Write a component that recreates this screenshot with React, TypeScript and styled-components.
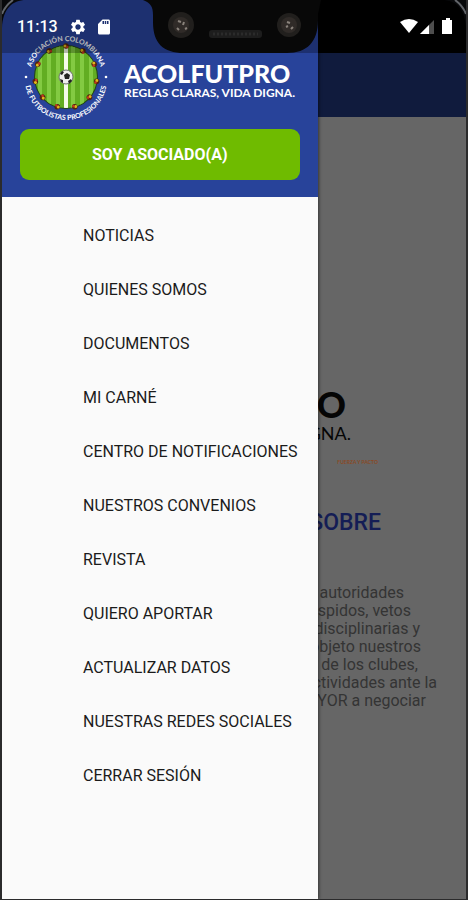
import React from "react";
import styled, { createGlobalStyle } from "styled-components";
import { MdSdCard, MdSettings } from "react-icons/md";

const GlobalStyle = createGlobalStyle`
  *, *::before, *::after { box-sizing: border-box; }
  body { margin: 0; background: #1c1d1f; font-family: Roboto, "Liberation Sans", sans-serif; }
`;

const Phone = styled.div`
  position: relative;
  min-height: 100vh;
  overflow: hidden;
  border: solid #2b2b2c;
  border-width: 0 2px 1px;
  background: #666666;
`;

const Page = styled.main`
  display: flex;
  flex-direction: column;
`;

const AppBar = styled.div`
  height: 117px;
  border-top: 53px solid #000000;
  background: #101b3d;
`;

const Hero = styled.section`
  display: flex;
  flex-direction: column;
  align-items: flex-end;
  padding-top: 268px;
  color: #050505;
`;

const HeroBrand = styled.strong`
  padding-right: 120px;
  font: 900 36px/38px Lato, sans-serif;
`;

const HeroTagline = styled.span`
  padding-right: 115px;
  font: 400 18px/20px Lato, sans-serif;
`;

const HeroCredit = styled.small`
  padding: 15px 88px 0 0;
  font: 700 5px/8px Lato, sans-serif;
  color: #8a4a25;
`;

const Heading = styled.h1`
  margin: 41px 0 44px;
  padding-right: 85px;
  text-align: right;
  font-size: 23px;
  line-height: 32px;
  font-weight: 500;
  color: #141d55;
`;

const Excerpt = styled.p`
  margin: 0;
  padding-top: 1px;
  font-size: 16px;
  line-height: 18px;
  color: #343434;
`;

const ExcerptLine = styled.span<{ $end: number }>`
  display: block;
  padding-right: ${({ $end }) => $end}px;
  text-align: right;
  white-space: nowrap;
`;

const Drawer = styled.aside`
  position: absolute;
  inset: 0 auto 0 0;
  width: 68%;
  background: #fafafa;
  box-shadow: 1px 0 3px rgba(0, 0, 0, 0.5);
`;

const DrawerHeader = styled.header`
  display: flex;
  flex-direction: column;
  height: 197px;
  padding: 33px 18px 17px;
  background: #28439a;
`;

const Brand = styled.div`
  display: flex;
  align-items: center;
  gap: 14px;
  height: 88px;
  padding-left: 2px;
`;

const Crest = styled.svg`
  flex: none;
  width: 88px;
  height: 88px;
  overflow: visible;
  font: 700 7px Lato, sans-serif;
`;

const BrandText = styled.div`
  display: flex;
  flex-direction: column;
  padding-top: 8px;
  white-space: nowrap;
  color: #ffffff;
`;

const BrandName = styled.strong`
  font: 900 25px/24px Lato, sans-serif;
`;

const Tagline = styled.span`
  font: 700 12px/16px Lato, sans-serif;
`;

const MemberButton = styled.button`
  height: 51px;
  margin-top: 8px;
  flex: none;
  border: 0;
  border-radius: 9px;
  background: #6fbb00;
  color: #ffffff;
  font: 700 16px/20px Roboto, sans-serif;
`;

const Menu = styled.ul`
  margin: 0;
  padding: 12px 0;
  list-style: none;
`;

const MenuLink = styled.a`
  display: flex;
  align-items: center;
  height: 54px;
  padding-left: 81px;
  font-size: 16px;
  line-height: 20px;
  white-space: nowrap;
  color: #1b1b1b;
  text-decoration: none;
`;

const StatusBar = styled.div`
  position: absolute;
  inset: 0 0 auto;
  display: flex;
  align-items: center;
  justify-content: space-between;
  height: 53px;
  padding: 0 14px 0 15px;
  background: rgba(0, 0, 0, 0.27);
  color: #ffffff;
`;

const StatusGroup = styled.div`
  display: flex;
  align-items: center;
  gap: 8px;
  height: 53px;
`;

const Clock = styled.time`
  width: 44px;
  font-size: 16px;
  line-height: 22px;
  font-weight: 500;
`;

const SignalIcons = styled.svg`
  display: block;
  width: 52px;
  height: 18px;
`;

const Bezel = styled.svg`
  position: absolute;
  top: 0;
  left: 141px;
  width: 178px;
  height: 53px;
`;

const Corner = styled.svg<{ $right?: boolean }>`
  position: absolute;
  top: 0;
  ${({ $right }) => ($right ? "right: 0; transform: scaleX(-1);" : "left: 0;")}
  width: 24px;
  height: 28px;
`;

const menuItems = [
  "NOTICIAS",
  "QUIENES SOMOS",
  "DOCUMENTOS",
  "MI CARNÉ",
  "CENTRO DE NOTIFICACIONES",
  "NUESTROS CONVENIOS",
  "REVISTA",
  "QUIERO APORTAR",
  "ACTUALIZAR DATOS",
  "NUESTRAS REDES SOCIALES",
  "CERRAR SESIÓN",
];

const excerpt = [
  { text: "autoridades", end: 62 },
  { text: "spidos, vetos", end: 55 },
  { text: "disciplinarias y", end: 46 },
  { text: "objeto nuestros", end: 45 },
  { text: "de los clubes,", end: 48 },
  { text: "ctividades ante la", end: 29 },
  { text: "YOR a negociar", end: 40 },
];

const players = Array.from({ length: 11 }, (_, i) => (i * 360) / 11);

function CrestLogo() {
  return (
    <Crest viewBox="0 0 88 88" role="img" aria-label="Asociación Colombiana de Futbolistas Profesionales">
      <defs>
        <path id="arc-top" d="M8 44A36 36 0 0 1 80 44" />
        <path id="arc-bottom" d="M3 46A41 41 0 0 0 85 46" />
        <clipPath id="field"><circle cx="44" cy="44" r="31" /></clipPath>
      </defs>
      <circle cx="44" cy="44" r="32" fill="#234516" />
      <g clipPath="url(#field)">
        <rect x="12" y="12" width="64" height="64" fill="#62ad22" />
        {[16, 25, 34, 49, 58, 67].map((x) => (
          <rect key={x} x={x} y="12" width="4" height="64" fill="#83ca42" />
        ))}
        <rect x="42" y="12" width="4" height="64" fill="#f5fbea" />
      </g>
      {players.map((angle) => (
        <g key={angle} transform={`rotate(${angle} 44 44) translate(44 13)`}>
          <circle r="2.8" fill="#54250d" />
          <circle cx="-1" cy="0" r="1.5" fill="#e0b81c" />
          <circle cx="1.2" cy="1" r="1.3" fill="#c33b20" />
        </g>
      ))}
      <circle cx="44" cy="44" r="7" fill="#eeeeee" stroke="#6c746c" />
      <path d="M42 42l3-2 3 2-1 4h-4zM38 41l2-3 2 1-2 3zM38 46l3 1v3l-2-1zM46 48l3-2 1 2-3 3z" fill="#222222" />
      <circle cx="4" cy="44" r="1.3" fill="#ffffff" />
      <circle cx="84" cy="44" r="1.3" fill="#ffffff" />
      <text fill="#ffffff" textAnchor="middle">
        <textPath href="#arc-top" startOffset="50%">ASOCIACIÓN COLOMBIANA</textPath>
      </text>
      <text fill="#ffffff" textAnchor="middle">
        <textPath href="#arc-bottom" startOffset="50%">DE FUTBOLISTAS PROFESIONALES</textPath>
      </text>
    </Crest>
  );
}

function CornerMask({ right }: { right?: boolean }) {
  return (
    <Corner $right={right} viewBox="0 0 24 28" aria-hidden="true">
      <path d="M0 0H24C10 0 1 9 0 28Z" fill="#08090b" />
      <path d="M0 14Q3 6 11 0" fill="none" stroke="#62656a" strokeWidth="2" />
    </Corner>
  );
}

export default function App() {
  return (
    <>
      <GlobalStyle />
      <Phone>
        <Page>
          <AppBar />
          <Hero>
            <HeroBrand>O</HeroBrand>
            <HeroTagline>GNA.</HeroTagline>
            <HeroCredit>FUERZA Y PACTO</HeroCredit>
          </Hero>
          <Heading>SOBRE</Heading>
          <Excerpt>
            {excerpt.map(({ text, end }) => (
              <ExcerptLine key={text} $end={end}>{text}</ExcerptLine>
            ))}
          </Excerpt>
        </Page>
        <Drawer>
          <DrawerHeader>
            <Brand>
              <CrestLogo />
              <BrandText>
                <BrandName>ACOLFUTPRO</BrandName>
                <Tagline>REGLAS CLARAS, VIDA DIGNA.</Tagline>
              </BrandText>
            </Brand>
            <MemberButton type="button">SOY ASOCIADO(A)</MemberButton>
          </DrawerHeader>
          <nav>
            <Menu>
              {menuItems.map((item) => (
                <li key={item}><MenuLink href="#">{item}</MenuLink></li>
              ))}
            </Menu>
          </nav>
        </Drawer>
        <StatusBar>
          <StatusGroup>
            <Clock>11:13</Clock>
            <MdSettings size={18} aria-hidden="true" />
            <MdSdCard size={18} aria-hidden="true" />
          </StatusGroup>
          <StatusGroup>
            <SignalIcons viewBox="0 0 52 18" fill="#ffffff" aria-hidden="true">
              <path d="M0 4Q9-2 18 4L9 15Z" />
              <path d="M34 2V16H20Z" fill="#4e4e4e" />
              <path d="M29 7V16H20Z" />
              <path d="M44 2h2V0h4v2h2v14H42V2Z" />
            </SignalIcons>
          </StatusGroup>
        </StatusBar>
        <Bezel viewBox="0 0 178 53" aria-hidden="true">
          <path d="M0 0C8 3 10 7 10 15V22C10 43 20 53 41 53H144C164 53 175 42 175 20V14L178 0Z" fill="#080808" />
          <circle cx="38" cy="25" r="13" fill="#211f1d" />
          <circle cx="38" cy="25" r="8" fill="#302b28" />
          <path d="M35 21l3 1M34 28l2 2M41 22l-1 3M42 29l2-1" stroke="#8a837c" strokeWidth="2" />
          <rect x="66" y="30" width="53" height="8" rx="3" fill="#1d1d1d" />
          <path d="M70 34H115" stroke="#2b2b2b" strokeWidth="3" strokeDasharray="2 2" />
          <circle cx="146" cy="25" r="12" fill="#211f1d" />
          <circle cx="146" cy="25" r="8" fill="#302b28" />
          <path d="M144 22l3 1M143 27l2-1M148 29l2-2" stroke="#8a837c" strokeWidth="2" />
        </Bezel>
        <CornerMask />
        <CornerMask right />
      </Phone>
    </>
  );
}
